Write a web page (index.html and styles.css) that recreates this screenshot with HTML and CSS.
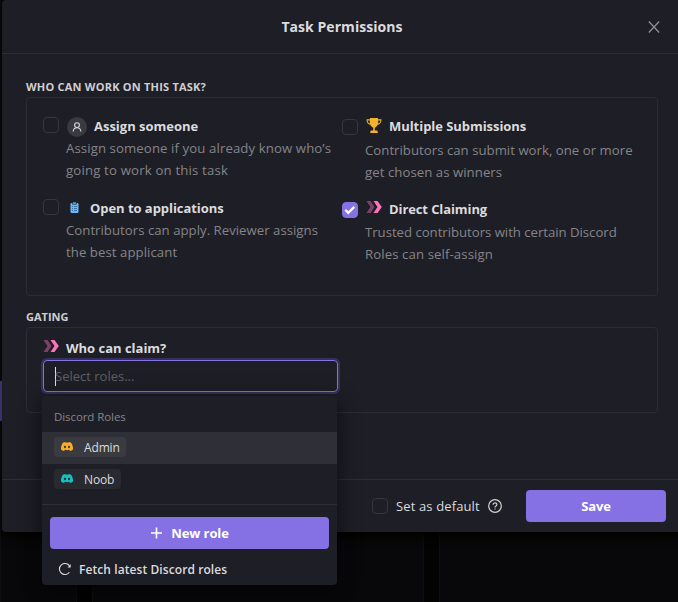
FILE: index.html
```html
<!DOCTYPE html>
<html lang="en">
<head>
<meta charset="utf-8">
<title>Task Permissions</title>
<link rel="stylesheet" href="styles.css">
</head>
<body>
<svg width="0" height="0" class="symbols" aria-hidden="true">
  <symbol id="claim" viewBox="0 0 16 14">
    <path d="M.5 1h4l4 6-4 6h-4l4-6z" fill="#7e4069"/>
    <path d="M7.500 1h4l4.300 6-4.300 6h-4l4-6z" fill="#ff74b8"/>
  </symbol>
  <symbol id="discord" viewBox="0 0 24 18">
    <path fill="currentColor" fill-rule="evenodd" d="M20.300 1.500A20 20 0 0 0 15.400 0l-.7 1.300a18 18 0 0 0-5.400 0L8.600 0a20 20 0 0 0-4.900 1.500C.6 6.100-.3 10.600.1 15a20 20 0 0 0 6 3l1.500-2.400c4 1.200 6 1.200 9 0L18 18a20 20 0 0 0 6-3c.4-5.100-.9-9.500-3.700-13.500zM8 12.300c-1.200 0-2.100-1.100-2.100-2.400S6.800 7.500 8 7.500s2.200 1.100 2.100 2.400c0 1.300-.9 2.400-2.100 2.400zm8 0c-1.200 0-2.100-1.100-2.100-2.400s.9-2.400 2.100-2.400 2.200 1.100 2.100 2.400c0 1.300-.9 2.400-2.100 2.400z"/>
  </symbol>
</svg>
<div class="backdrop"><i class="col first"></i><i class="col"></i><i class="col last"></i></div>
<i class="sidebar-mark"></i>
<main class="modal">
  <header class="head">
    <h1>Task Permissions</h1>
    <svg class="close" width="12" height="12" viewBox="0 0 12 12"><path d="M.8.5l10.400 11M11.200.5L.8 11.500" stroke="#939398" stroke-width="1.200" fill="none"/></svg>
  </header>
  <section class="body">
    <h2 class="label who">Who can work on this task?</h2>
    <div class="panel options">
      <div class="column left">
        <div class="option">
          <span class="check"></span>
          <div class="text">
            <div class="title"><span class="avatar"><svg width="10" height="10" viewBox="0 0 10 10" fill="none" stroke="#dcdcde" stroke-width="1.100"><circle cx="5" cy="3.100" r="2.400"/><path d="M1.100 9.500C1.400 7 2.600 5.700 5 5.700S8.600 7 8.900 9.500"/></svg></span><b class="t1">Assign someone</b></div>
            <p><span class="l1">Assign someone if you already know who’s</span><br><span class="l2">going to work on this task</span></p>
          </div>
        </div>
        <div class="option">
          <span class="check"></span>
          <div class="text">
            <div class="title"><svg class="clip" width="9" height="12" viewBox="0 0 9 12"><rect x=".5" y="1" width="8" height="10" rx="1.200" fill="#67b9fb"/><path d="M2.500 0h4v2.200h-4z" fill="#67b9fb" stroke="#1e1e26" stroke-width=".7"/><path d="M2 4.500h1M4 4.500h3M2 6.500h1M4 6.500h3M2 8.500h1M4 8.500h3" stroke="#255681" stroke-width=".7"/></svg><b class="t2">Open to applications</b></div>
            <p><span class="l3">Contributors can apply. Reviewer assigns</span><br><span class="l4">the best applicant</span></p>
          </div>
        </div>
      </div>
      <div class="column right">
        <div class="option">
          <span class="check"></span>
          <div class="text">
            <div class="title"><svg class="cup" width="16" height="15" viewBox="0 0 16 15"><path fill="#f1b42c" d="M4 0h8v1.300h3.500c0 3.300-1.200 5-3.800 5.500C11 8.300 10 9.300 8.800 9.700v2.800h1.500c.9 0 1.400.5 1.400 1.300V15H4.300v-1.200c0-.8.5-1.300 1.400-1.300h1.500V9.700C6 9.300 5 8.300 4.300 6.800 1.700 6.300.5 4.600.5 1.300H4zM1.600 2.400c.2 1.700.9 2.700 2.200 3.100V2.400zm12.800 0h-2.200v3.100c1.300-.4 2-1.400 2.200-3.100z"/></svg><b class="t3">Multiple Submissions</b></div>
            <p><span class="l5">Contributors can submit work, one or more</span><br><span class="l6">get chosen as winners</span></p>
          </div>
        </div>
        <div class="option">
          <span class="check on"><svg width="12" height="10" viewBox="0 0 12 10"><path d="M1.300 4.900l3 3 6-6" fill="none" stroke="#fff" stroke-width="2.200"/></svg></span>
          <div class="text">
            <div class="title"><svg class="claim" width="16" height="14"><use href="#claim"/></svg><b class="t4">Direct Claiming</b></div>
            <p><span class="l7">Trusted contributors with certain Discord</span><br><span class="l8">Roles can self-assign</span></p>
          </div>
        </div>
      </div>
    </div>
    <h2 class="label gating">Gating</h2>
    <div class="panel gate">
      <div class="title"><svg class="claim" width="16" height="14"><use href="#claim"/></svg><b class="t5">Who can claim?</b></div>
      <div class="select">
        <i class="caret"></i><span class="placeholder">Select roles...</span>
        <div class="menu">
          <div class="group">Discord Roles</div>
          <div class="item active"><span class="tag admin"><svg width="12" height="9"><use href="#discord"/></svg><span>Admin</span></span></div>
          <div class="item"><span class="tag noob"><svg width="12" height="9"><use href="#discord"/></svg><span>Noob</span></span></div>
          <div class="actions">
            <button class="primary new"><svg width="11" height="12" viewBox="0 0 11 12"><path d="M5.500 .5v11M0 6h11" stroke="#fff" stroke-width="1.600"/></svg><span>New role</span></button>
            <div class="fetch"><svg width="14" height="14" viewBox="0 0 14 14"><path d="M11.400 10.200A5.500 5.500 0 1 1 11.500 3.900" fill="none" stroke="#dcdcde" stroke-width="1.100"/><path d="M12.700 2.100v3.300H9.600z" fill="#dcdcde"/></svg><span>Fetch latest Discord roles</span></div>
          </div>
        </div>
      </div>
    </div>
  </section>
  <footer class="foot">
    <span class="check"></span><span class="default">Set as default</span>
    <svg class="help" width="14" height="14" viewBox="0 0 14 14" fill="none" stroke="#d2d2d4" stroke-width="1.200"><circle cx="7" cy="7" r="6.300"/><path d="M5.100 5.700c0-2.400 3.800-2.300 3.800-.1 0 1.300-1.900 1.400-1.900 2.800"/><path d="M7 9.400v1.200"/></svg>
    <button class="primary save"><span>Save</span></button>
  </footer>
</main>
</body>
</html>
```
FILE: styles.css
```css
* { box-sizing: border-box; }
body {
  margin: 0;
  width: 678px;
  height: 602px;
  overflow: hidden;
  position: relative;
  background: #030304;
  color: #dcdcde;
  font: 13px/22px "Open Sans", "Noto Sans", sans-serif;
}
.symbols { position: absolute; }
svg { display: block; flex: none; }
h1, h2, p { margin: 0; }
b { font-weight: 700; white-space: nowrap; letter-spacing: -.05px; }

.backdrop { position: absolute; inset: 0; display: grid; grid-template-columns: 77px 332px 240px; gap: 15px; }
.col { background: #08080a; border: solid #0e0e11; border-width: 0 1px; }
.sidebar-mark { position: absolute; z-index: 1; left: 0; top: 381px; width: 2px; height: 40px; background: #39316a; }

.modal {
  position: relative;
  margin-left: 2px;
  width: 680px;
  height: 532px;
  display: flex;
  flex-direction: column;
  background: #1e1e26;
  border-radius: 4px;
  box-shadow: 0 4px 12px #000;
}
.head { height: 54px; display: grid; grid-template-columns: 40px 1fr 40px; align-items: center; border-bottom: 1px solid #2e2e38; }
h1 { grid-column: 2; text-align: center; font-size: 14px; font-weight: 700; line-height: 22px; letter-spacing: .05px; }
.close { justify-self: start; margin-left: 6px; }

.body { flex: 1; padding: 24px 24px 0; }
.label { height: 19px; line-height: 17px; font-size: 11px; font-weight: 700; text-transform: uppercase; color: #cfcfd1; }
.who { letter-spacing: .22px; }
.gating { margin-top: 12px; }
.panel { border: 1px solid #2c2c35; border-radius: 4px; }
.options { height: 199px; display: grid; grid-template-columns: 299px 299px; padding: 0 16px; }
.column { display: flex; flex-direction: column; }
.left { padding-top: 17px; gap: 16px; }
.right { padding-top: 17px; gap: 14px; }
.option { display: flex; gap: 7px; }
.check { flex: none; width: 16px; height: 16px; border: 1px solid #36363f; border-radius: 4px; display: flex; align-items: center; justify-content: center; }
.left .check { margin-top: 2px; }
.right .check { margin-top: 4px; }
.right .check.on { margin-top: 5px; }
.check.on { background: #8570e4; border-color: #8570e4; }
.title { display: flex; align-items: center; height: 22px; }
.right .title { height: 24px; padding-bottom: 2px; }
.right .option + .option .title { padding-bottom: 1px; }
.avatar { width: 20px; height: 20px; margin: 2px 7px 0 1px; border-radius: 50%; background: #393941; display: flex; align-items: center; justify-content: center; }
.clip { margin: 0 11px 1px 4px; }
.cup { margin: 0 7px 2px 1px; }
.claim { margin: 0 7px 3px 1px; }
p { color: #858588; white-space: nowrap; font-size: 13.200px; }
.t1, .t5 { letter-spacing: -.01px; }
.t4 { letter-spacing: -.1px; }
.l1 { letter-spacing: .1px; }
.l2 { letter-spacing: .17px; }
.l3 { letter-spacing: .02px; }
.l4 { letter-spacing: .06px; }
.l5 { letter-spacing: .02px; }
.l6 { letter-spacing: .05px; }
.l7 { letter-spacing: -.03px; }
.l8 { letter-spacing: .1px; }

.gate { height: 86px; padding: 9px 16px 0; }
.gate .title { height: 23px; padding-bottom: 1px; }
.gate .claim { margin: 0 7px 4px 0; }
.select { position: relative; width: 295px; height: 32px; display: flex; align-items: center; padding-left: 11px; border: 1px solid #8570e4; border-radius: 4px; box-shadow: 0 0 0 2px #37315a; }
.caret { width: 1px; height: 19px; background: #e0e0e2; }
.placeholder { color: #5e5e65; margin-left: -1px; }

.menu { position: absolute; z-index: 2; left: -2px; top: 35px; width: 295px; height: 189px; background: #1e1e26; border-radius: 4px; font-size: 12px; box-shadow: 0 6px 16px rgba(0,0,0,.4), 0 2px 24px rgba(0,0,0,.25); }
.group { height: 36px; padding: 10px 12px 0; color: #858588; font-size: 11.500px; letter-spacing: -.08px; }
.item { height: 32px; padding: 5px 12px; }
.active { background: #2f2f37; }
.tag { height: 20px; width: 67px; padding-left: 7px; display: flex; align-items: center; gap: 11px; border-radius: 4px; background: #292930; line-height: 20px; }
.tag svg { margin-bottom: 1px; }
.tag span { padding-top: 2px; letter-spacing: -.15px; }
.admin { width: 72px; background: #3a3a41; }
.admin svg { color: #fbac24; }
.noob svg { color: #16bfc1; }
.actions { margin-top: 8px; padding: 12px 8px 0; border-top: 1px solid #2e2e37; }
.primary { height: 32px; padding: 0; border: 0; border-radius: 4px; background: #8570e4; color: #fff; font: 700 13px/22px "Open Sans", "Noto Sans", sans-serif; letter-spacing: -.1px; display: flex; align-items: center; justify-content: center; }
.new { width: 279px; gap: 9px; padding-left: 1px; }
.fetch { display: flex; align-items: center; gap: 7px; height: 22px; margin: 9px 0 0 8px; font-weight: 600; white-space: nowrap; letter-spacing: .08px; }
.fetch svg { margin-bottom: 1px; }
.fetch span { padding-top: 1px; }

.foot { height: 53px; display: flex; align-items: center; padding: 0 16px 0 370px; border-top: 1px solid #2e2e38; }
.default { margin-left: 8px; white-space: nowrap; letter-spacing: .13px; }
.help { margin-left: 8px; }
.save { width: 140px; margin-left: auto; }
```
